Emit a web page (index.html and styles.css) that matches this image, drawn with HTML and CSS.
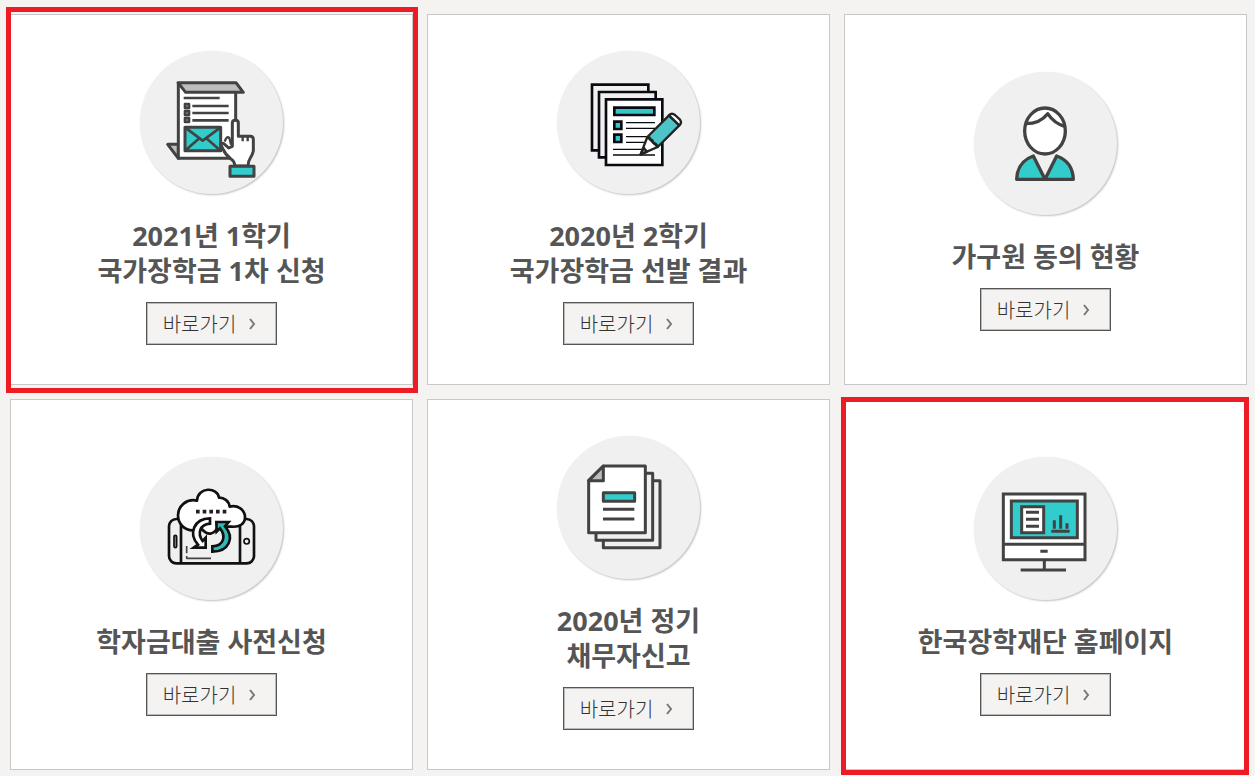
FILE: index.html
```
<!DOCTYPE html>
<html lang="ko">
<head>
    <meta charset="UTF-8">
    <meta name="viewport" content="width=device-width, initial-scale=1.0">
    <title>한국장학재단</title>
    <link rel="stylesheet" href="styles.css">
</head>
<body>
    <main class="card-grid">
        <section class="card highlight-apply">
            <svg class="icon" viewBox="31 32 429 429" aria-hidden="true">
                <g fill="#fff" stroke="#424242" stroke-width="9" stroke-linejoin="round">
                    <path d="M114 312h32v42z" fill="#bdbdbd"/>
                    <path d="M145 127v227h175V127z" stroke="none"/>
                    <path d="M318 158v90M306 354H146V127" fill="none"/>
                    <path d="M145 127h174l22 29H168z" fill="#bdbdbd"/>
                    <path d="M162 173h108M188 197h109M188 218h109M188 240h109" stroke-width="8"/>
                    <path d="M166 191h12v12h-12zM166 212h12v12h-12zM166 233h12v12h-12z" fill="#999" stroke-width="8"/>
                    <path d="M166 261h107v70H166z" fill="#33cccc"/>
                    <path d="M166 261l53 40 54-40M166 331l43-37M273 331l-43-37" fill="none" stroke-width="8"/>
                    <path d="M308 318v-70q0-8 9-8t9 8v40h36q9 0 9 10v34q-2 10-9 21-7 10-7 24h-40q1-14-12-22-16-12-22-27l-8-16q6-7 12 0l12 11z"/>
                    <path d="M285 304q6-19 14-11 1 2 5 20M339 288v15M354 288v15" fill="none" stroke-width="7"/>
                    <path d="M301 378h72v30h-72z" fill="#33cccc"/>
                </g>
            </svg>
            <h2 class="title">2021년 1학기<br>국가장학금 1차 신청</h2>
            <a class="go-btn" href="#">바로가기
                <svg class="arrow" viewBox="0 0 8 12" aria-hidden="true"><path d="M2 1l4 5-4 5"/></svg>
            </a>
        </section>

        <section class="card">
            <svg class="icon" viewBox="27 32 429 429" aria-hidden="true">
                <g fill="#f0f0f0" stroke="#0a0a12" stroke-width="8">
                    <path d="M132 133h169v197H132z"/>
                    <path d="M153 155h170v196H153z"/>
                    <path d="M174 177h169v197H174z" fill="#fff"/>
                    <path d="M199 202h120v22H199zM199 244h21v22h-21zM199 283h21v22h-21z" fill="#33c8c8"/>
                    <path d="M234 247h87M234 264h87M234 289h66M234 306h60M195 327h95M195 344h126" stroke-width="4"/>
                </g>
                <g stroke="#222" stroke-width="7" stroke-linejoin="round">
                    <path d="M298 290l-20 52 51-22z" fill="#fff"/>
                    <path d="M287 322l-9 20 19-8z" fill="#33c8c8"/>
                    <path d="M298 290l65-65 31 30-65 65q-3-11-13-12-1-11-9-11-1-7-9-7z" fill="#4cc4c8"/>
                    <path d="M363 225q8-9 18-1l15 14q7 9-2 17z" fill="#fff"/>
                </g>
            </svg>
            <h2 class="title">2020년 2학기<br>국가장학금 선발 결과</h2>
            <a class="go-btn" href="#">바로가기
                <svg class="arrow" viewBox="0 0 8 12" aria-hidden="true"><path d="M2 1l4 5-4 5"/></svg>
            </a>
        </section>

        <section class="card single-line">
            <svg class="icon" viewBox="25 28 429 429" aria-hidden="true">
                <g fill="#fff" stroke="#424242" stroke-width="10" stroke-linejoin="round">
                    <ellipse cx="238" cy="205" rx="61" ry="69"/>
                    <path d="M180 183q43 0 66-30 20 30 53 39" fill="none"/>
                    <path d="M203 280l35 70 35-70" stroke="none" fill="#f0f0f0"/>
                    <path d="M153 350q2-53 50-70l35 70zM323 350q-2-53-50-70l-35 70z" fill="#33cccc"/>
                </g>
            </svg>
            <h2 class="title">가구원 동의 현황</h2>
            <a class="go-btn" href="#">바로가기
                <svg class="arrow" viewBox="0 0 8 12" aria-hidden="true"><path d="M2 1l4 5-4 5"/></svg>
            </a>
        </section>

        <section class="card single-line">
            <svg class="icon" viewBox="31 20 429 429" aria-hidden="true">
                <g fill="#f0f0f0" stroke="#111" stroke-width="8" stroke-linejoin="round">
                    <rect x="118" y="206" width="255" height="133" rx="22"/>
                    <path d="M154 206v133M331 206v133"/>
                    <rect x="133" y="255" width="8" height="37" rx="4" stroke-width="5" fill="#888"/>
                    <circle cx="351" cy="273" r="8" stroke-width="5"/>
                    <path d="M171 287v22M171 317v7h73" fill="none" stroke="#444" stroke-width="5"/>
                    <path d="M190 240c-26 0-45-20-45-45 0-28 26-51 57-44 2-42 62-42 66-9 14-1 30 10 32 27 24-6 46 9 46 32 0 20-17 30-40 28h-40q-22 38-50 7z" fill="#fff"/>
                </g>
                <path d="M199 184h92" stroke="#222" stroke-width="11" stroke-dasharray="11 9" fill="none"/>
                <g stroke="#111" stroke-width="8">
                    <path d="M241 204v16c-32 3-38 30-22 52l9-10v30h-36l13-9c-30-34-12-78 36-79z" fill="#fff"/>
                    <path d="M248 304v-16c36-2 41-32 23-54l-10 10-1-29h37l-11 13c30 34 12 76-38 76z" fill="#33b8b8"/>
                </g>
            </svg>
            <h2 class="title">학자금대출 사전신청</h2>
            <a class="go-btn" href="#">바로가기
                <svg class="arrow" viewBox="0 0 8 12" aria-hidden="true"><path d="M2 1l4 5-4 5"/></svg>
            </a>
        </section>

        <section class="card">
            <svg class="icon" viewBox="27 17 429 429" aria-hidden="true">
                <g fill="#f0f0f0" stroke="#424242" stroke-width="9" stroke-linejoin="round">
                    <path d="M166 151h170v201H166z"/>
                    <path d="M144 129h170v201H144z"/>
                    <path d="M122 151l44-44h126v200H122z" fill="#fff"/>
                    <path d="M122 151l44-44v44z" fill="#bdbdbd"/>
                    <path d="M166 187h94v26h-94z" fill="#33cccc"/>
                    <path d="M165 237h94M165 266h94"/>
                </g>
            </svg>
            <h2 class="title">2020년 정기<br>채무자신고</h2>
            <a class="go-btn" href="#">바로가기
                <svg class="arrow" viewBox="0 0 8 12" aria-hidden="true"><path d="M2 1l4 5-4 5"/></svg>
            </a>
        </section>

        <section class="card single-line highlight-home">
            <svg class="icon" viewBox="24 20 429 429" aria-hidden="true">
                <g fill="#fff" stroke="#424242" stroke-width="9">
                    <path d="M112 131h245v197H112z"/>
                    <path d="M112 282h245M235 328v30M164 359h136M223 303h22"/>
                    <path d="M136 152h198v110H136z" fill="#33cccc"/>
                    <path d="M167 169h66v78h-66z"/>
                    <path d="M180 186h39M180 207h39M180 228h39"/>
                    <path d="M256 243h55M265 235v-25M284 235v-40M303 235v-16"/>
                </g>
            </svg>
            <h2 class="title">한국장학재단 홈페이지</h2>
            <a class="go-btn" href="#">바로가기
                <svg class="arrow" viewBox="0 0 8 12" aria-hidden="true"><path d="M2 1l4 5-4 5"/></svg>
            </a>
        </section>
    </main>
</body>
</html>
```
FILE: styles.css
```
* {
    box-sizing: border-box;
}

body {
    font-family: "Open Sans", "Noto Sans CJK KR", sans-serif;
    margin: 0;
    background-color: #f4f3f2;
}

.card-grid {
    display: grid;
    grid-template-columns: repeat(3, 1fr);
    gap: 14px;
    padding: 14px 8px 6px 10px;
}

.card {
    position: relative;
    display: flex;
    flex-direction: column;
    align-items: center;
    min-height: 371px;
    padding: 36px 0;
    background-color: #fff;
    border: 1px solid #c8c8c8;
}

.card.single-line {
    padding-top: 57px;
}

/* Red frames around the two menus to click */
.highlight-apply::after,
.highlight-home::after {
    content: "";
    position: absolute;
    border: 5px solid #ed1c24;
    pointer-events: none;
}

.highlight-apply::after {
    inset: -8px -6px -9px -5px;
}

.highlight-home::after {
    inset: -3px -3px -6px -4px;
}

.icon {
    width: 143px;
    height: 143px;
    border-radius: 50%;
    background-color: #f0f0f0;
    box-shadow: 1px 1px 2px rgba(0, 0, 0, 0.25);
}

.title {
    margin: 24px 0 14px;
    font-size: 27px;
    font-weight: bold;
    line-height: 35px;
    text-align: center;
    color: #555;
}

.go-btn {
    display: flex;
    align-items: center;
    justify-content: center;
    gap: 12px;
    width: 131px;
    height: 43px;
    padding-right: 4px;
    background-color: #f4f3f2;
    border: 1px solid #555;
    box-shadow: inset 0 0 0 1px #bbb;
    font-size: 20px;
    font-weight: 300;
    color: #333;
    text-decoration: none;
}

.go-btn:hover {
    background-color: #e8e8e8;
}

.arrow {
    width: 8px;
    height: 12px;
    fill: none;
    stroke: #777;
    stroke-width: 2;
}
```
